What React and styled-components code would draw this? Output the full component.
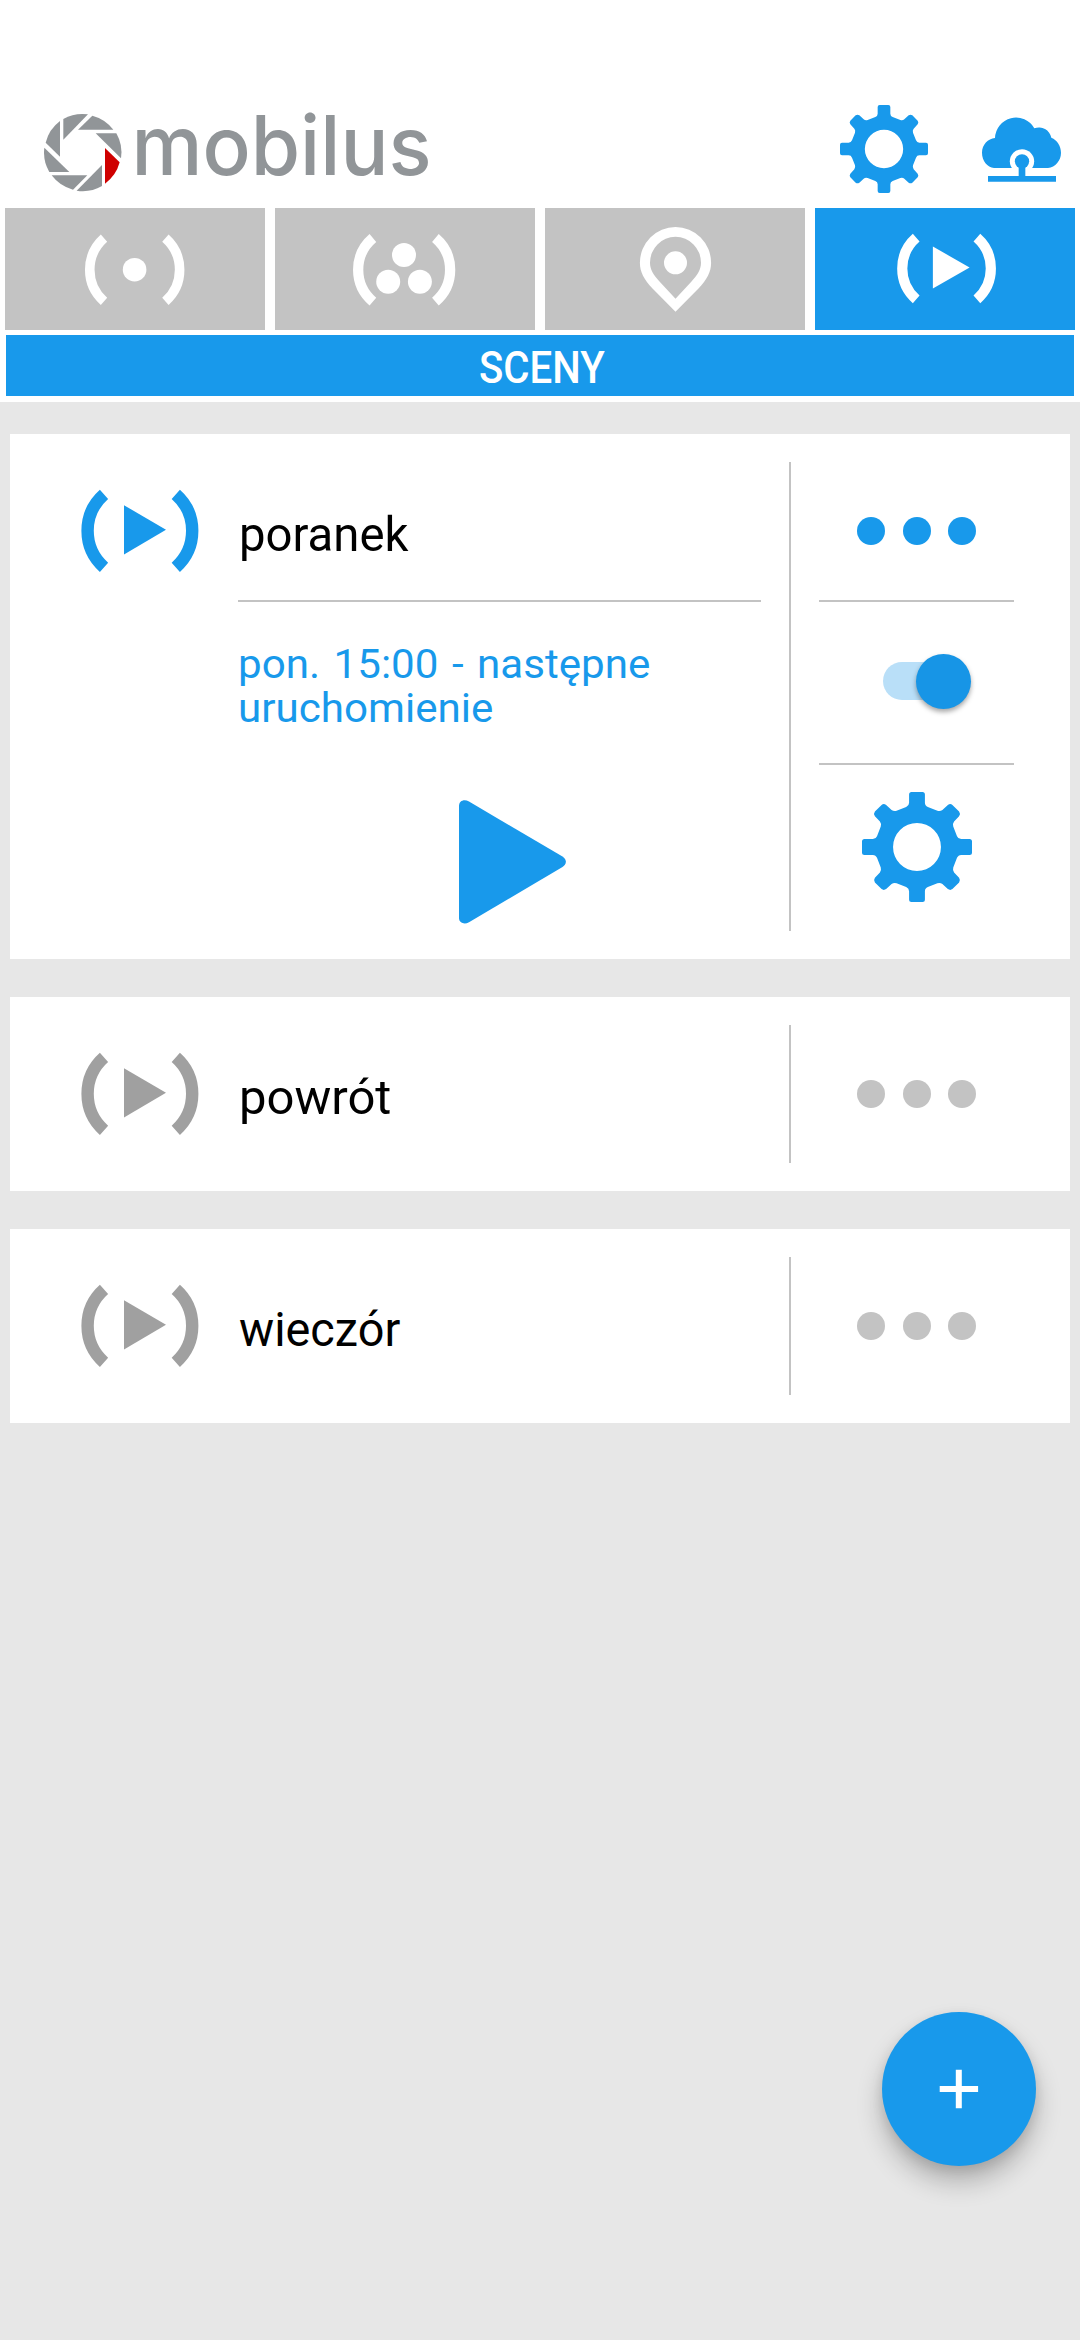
import React from "react";
import styled, { createGlobalStyle, ThemeProvider } from "styled-components";

const theme = {
  blue: "#1899eb",
  grey: "#c3c3c3",
  iconGrey: "#a0a0a0",
  page: "#e7e7e7",
};

const GlobalStyle = createGlobalStyle`
  * { box-sizing: border-box; }
  body {
    margin: 0;
    background: ${theme.page};
    font-family: Roboto, "Noto Sans", sans-serif;
  }
  button { font: inherit; border: 0; padding: 0; background: none; cursor: pointer; }
  svg { display: block; }
`;

const Screen = styled.div`
  position: relative;
  width: 1080px;
  height: 2340px;
  overflow: hidden;
  background: ${({ theme }) => theme.page};
`;

const Top = styled.div`
  background: #fff;
  padding-bottom: 6px;
`;

const Header = styled.header`
  display: flex;
  align-items: flex-start;
  justify-content: space-between;
  height: 208px;
  padding: 90px 19px 0 44px;
`;

const Actions = styled.div`
  display: flex;
  align-items: flex-start;
  gap: 54px;
  padding-top: 15px;
  color: ${({ theme }) => theme.blue};
`;

const CloudButton = styled.button`
  margin-top: 12px;
  color: inherit;
`;

const GearButton = styled.button`
  display: block;
  color: ${({ theme }) => theme.blue};
`;

const Tabs = styled.nav`
  display: grid;
  grid-template-columns: repeat(4, 1fr);
  gap: 10px;
  padding: 0 5px;
`;

const Tab = styled.button`
  display: block;
  height: 122px;
  color: #fff;
  background: ${({ $active, theme }) => ($active ? theme.blue : theme.grey)};
`;

const Title = styled.h1`
  display: flex;
  align-items: center;
  justify-content: center;
  height: 61px;
  margin: 5px 6px 0;
  padding-top: 4px;
  padding-left: 3px;
  background: ${({ theme }) => theme.blue};
  color: #fff;
  font-size: 44px;
  font-weight: 500;
  line-height: 52px;
`;

const Condensed = styled.span`
  display: inline-block;
  white-space: nowrap;
  transform: scaleX(${({ $ratio }) => $ratio});
  transform-origin: ${({ $origin }) => $origin || "left"} center;
`;

const List = styled.main`
  display: flex;
  flex-direction: column;
  gap: 38px;
  padding: 32px 10px 0;
`;

const Card = styled.section`
  display: flex;
  padding: 28px 0;
  background: #fff;
`;

const IconCell = styled.div`
  display: flex;
  align-items: center;
  width: 228px;
  height: 138px;
  padding-left: 71px;
  color: ${({ $active, theme }) => ($active ? theme.blue : theme.iconGrey)};
`;

const Body = styled.div`
  width: 523px;
`;

const Name = styled.div`
  display: flex;
  align-items: center;
  height: 138px;
  padding-top: 7px;
  padding-left: 1px;
  color: #000;
  font-size: 49px;
  font-weight: 380;
`;

const Rule = styled.hr`
  height: 2px;
  margin: 0;
  border: 0;
  background: ${({ theme }) => theme.grey};
`;

const Schedule = styled.div`
  display: flex;
  flex-direction: column;
  align-items: flex-start;
  margin-top: 40px;
  color: ${({ theme }) => theme.blue};
  font-size: 41.5px;
  font-weight: 380;
  line-height: 44px;
  word-spacing: 3px;
`;

const PlayButton = styled.button`
  display: block;
  margin: 70px 0 0 221px;
  color: ${({ theme }) => theme.blue};
`;

const Divider = styled.div`
  width: 2px;
  margin: 0 28px;
  background: ${({ theme }) => theme.grey};
`;

const Side = styled.div`
  width: 195px;
  min-height: ${({ $open }) => ($open ? "469px" : "138px")};
`;

const More = styled.button`
  display: flex;
  align-items: center;
  justify-content: center;
  gap: 17.5px;
  width: 100%;
  height: 138px;
`;

const Dot = styled.span`
  width: 28px;
  height: 28px;
  border-radius: 50%;
  background: ${({ $active, theme }) => ($active ? theme.blue : theme.grey)};
`;

const SwitchCell = styled.div`
  display: flex;
  align-items: center;
  height: 161px;
  padding: 0 0 3px 64px;
`;

const Track = styled.div`
  display: flex;
  align-items: center;
  justify-content: flex-end;
  width: 80px;
  height: 38px;
  border-radius: 19px;
  background: #b9dff8;
`;

const Thumb = styled.span`
  flex: none;
  width: 55px;
  height: 55px;
  margin-right: -8px;
  border-radius: 50%;
  background: #1795e6;
  box-shadow: 0 3px 5px rgba(0, 0, 0, 0.35);
`;

const SettingsCell = styled.div`
  display: flex;
  justify-content: center;
  padding-top: 27px;
`;

const Fab = styled.button`
  position: absolute;
  top: 2012px;
  left: 882px;
  display: flex;
  align-items: center;
  justify-content: center;
  width: 154px;
  height: 154px;
  border-radius: 50%;
  background: ${({ theme }) => theme.blue};
  box-shadow: 0 16px 26px rgba(0, 0, 0, 0.24), 0 4px 12px rgba(0, 0, 0, 0.1);
`;

/* One quarter of the gear outline; the other three are its rotations. */
const gearQuarter = [
  ["L", -13, -132], ["L", 13, -132], ["Q", 19, -132, 19, -126], ["L", 19, -106],
  ["Q", 19, -99, 26, -96], ["L", 49, -87], ["Q", 56, -85, 61, -89], ["L", 74, -101],
  ["Q", 80, -105, 85, -101], ["L", 101, -85], ["Q", 105, -80, 101, -74], ["L", 89, -61],
  ["Q", 85, -56, 87, -49], ["L", 96, -26], ["Q", 99, -19, 106, -19], ["L", 126, -19],
  ["Q", 132, -19, 132, -13],
];

const gearPath = (() => {
  const parts = [];
  for (let turn = 0; turn < 4; turn += 1) {
    gearQuarter.forEach(([cmd, ...nums]) => {
      const out = [];
      for (let i = 0; i < nums.length; i += 2) {
        let [x, y] = [nums[i], nums[i + 1]];
        for (let t = 0; t < turn; t += 1) [x, y] = [-y, x];
        out.push(x, y);
      }
      parts.push(cmd + out.join(" "));
    });
  }
  return "M" + parts.join(" ").slice(1) + "Z M57.5 0A57.5 57.5 0 1 0 -57.5 0A57.5 57.5 0 1 0 57.5 0Z";
})();

const Gear = ({ size }) => (
  <svg width={size} height={size} viewBox="-132 -132 264 264" fill="currentColor" fillRule="evenodd">
    <path d={gearPath} />
  </svg>
);

const Cloud = () => (
  <svg width="79" height="65" viewBox="546 111 237 195" fill="currentColor">
    <path d="M582 264C562 262 546 242 546 218C546 194 564 176 585 174A63 63 0 0 1 703 145A38 38 0 0 1 754 173C772 180 783 198 783 218C783 242 766 261 744 264Z" />
    <circle cx="666" cy="244" r="36.5" fill="#fff" />
    <circle cx="666" cy="244" r="21.5" />
    <path d="M656 255H676V288H768V305H564V288H656Z" />
  </svg>
);

const Logo = () => (
  <svg width="400" height="112" viewBox="44 90 400 112">
    <g transform="translate(0 80) scale(0.33333)" fill="#919598">
      <path d="M180 123V230L137 188A116 116 0 0 1 180 123Z" />
      <path d="M190 117A116 116 0 0 1 264 103L190 179Z" />
      <path d="M277 107A116 116 0 0 1 340 149H234Z" />
      <path d="M287 160H349A116 116 0 0 1 363 235Z" />
      <path d="M315 204L359 247A116 116 0 0 1 315 311Z" fill="#cf0000" />
      <path d="M306 255V318A116 116 0 0 1 230 332Z" />
      <path d="M155 286H262L219 329A116 116 0 0 1 155 286Z" />
      <path d="M133 203L208 276H148A116 116 0 0 1 133 203Z" />
    </g>
    <text
      x="131.5"
      y="175.3"
      textLength="300"
      lengthAdjust="spacingAndGlyphs"
      fontFamily="Inter, sans-serif"
      fontSize="82"
      fontWeight="550"
      fill="#919598"
    >
      mobilus
    </text>
  </svg>
);

const TabIcon = ({ x, children }) => (
  <svg width="260" height="122" viewBox={`${x} 208 260 122`} fill="currentColor">
    {children}
  </svg>
);

const Arcs = ({ d, width }) => <path d={d} fill="none" stroke="currentColor" strokeWidth={width} />;

const DeviceIcon = () => (
  <TabIcon x={5}>
    <Arcs width={9.6} d="M104 238.2A42.2 42.2 0 0 0 104 301.4M165.4 238.2A42.2 42.2 0 0 1 165.4 301.4" />
    <circle cx="134.6" cy="269.7" r="11.8" />
  </TabIcon>
);

const GroupIcon = () => (
  <TabIcon x={275}>
    <Arcs width={10.3} d="M372.9 238A41.7 41.7 0 0 0 372.9 301.6M435.4 238A41.7 41.7 0 0 1 435.4 301.6" />
    <circle cx="404" cy="255" r="12" />
    <circle cx="388.2" cy="281.7" r="12" />
    <circle cx="419.9" cy="281.7" r="12" />
  </TabIcon>
);

const PlaceIcon = () => (
  <TabIcon x={545}>
    <path
      fillRule="evenodd"
      d="M675.5 311.8L652.5 288.5C644 279.5 639.9 272 639.9 262.8A35.6 35.8 0 0 1 711.1 262.8C711.1 272 707 279.5 698.5 288.5ZM675.5 298.8L691.5 281.5C697.5 275 701 269.5 701 262.8A25.5 26 0 0 0 650 262.8C650 269.5 653.5 275 659.5 281.5Z"
    />
    <circle cx="675.5" cy="262.8" r="11.5" />
  </TabIcon>
);

const ScenesIcon = () => (
  <TabIcon x={815}>
    <Arcs width={10.2} d="M916.2 237.7A41 41 0 0 0 916.2 299.3M976.9 237.7A41 41 0 0 1 976.9 299.3" />
    <path d="M932.9 246.6V288.4L969.6 267.4Z" />
  </TabIcon>
);

const SceneIcon = () => (
  <svg width="118" height="84" viewBox="81 488.5 118 84" fill="currentColor">
    <Arcs width={12.4} d="M104 493.8A48.8 48.8 0 0 0 104 566.8M175.8 493.8A48.8 48.8 0 0 1 175.8 566.8" />
    <path d="M124 504.7V554L166 529.3Z" />
  </svg>
);

const Play = () => (
  <svg width="107" height="124" viewBox="0 0 107 124" fill="currentColor">
    <path d="M0 6C0 1 5 -1.2 10 1.6L103.5 56.5C108 59.5 108 64.2 103.5 67L10 122.2C5 125 0 122.5 0 118Z" />
  </svg>
);

const Scene = ({ name, ratio, active, schedule }) => (
  <Card>
    <IconCell $active={active}>
      <SceneIcon />
    </IconCell>
    <Body>
      <Name>
        <Condensed $ratio={ratio}>{name}</Condensed>
      </Name>
      {schedule && (
        <>
          <Rule />
          <Schedule>
            {schedule.map((line) => (
              <Condensed key={line} $ratio={1.015}>{line}</Condensed>
            ))}
          </Schedule>
          <PlayButton aria-label="Uruchom">
            <Play />
          </PlayButton>
        </>
      )}
    </Body>
    <Divider />
    <Side $open={Boolean(schedule)}>
      <More aria-label="Więcej">
        <Dot $active={active} />
        <Dot $active={active} />
        <Dot $active={active} />
      </More>
      {schedule && (
        <>
          <Rule />
          <SwitchCell>
            <Track role="switch" aria-checked="true">
              <Thumb />
            </Track>
          </SwitchCell>
          <Rule />
          <SettingsCell>
            <GearButton aria-label="Ustawienia">
              <Gear size={110} />
            </GearButton>
          </SettingsCell>
        </>
      )}
    </Side>
  </Card>
);

export default function App() {
  return (
    <ThemeProvider theme={theme}>
      <GlobalStyle />
      <Screen>
        <Top>
          <Header>
            <Logo />
            <Actions>
              <GearButton aria-label="Ustawienia">
                <Gear size={88} />
              </GearButton>
              <CloudButton aria-label="Chmura">
                <Cloud />
              </CloudButton>
            </Actions>
          </Header>
          <Tabs>
            <Tab><DeviceIcon /></Tab>
            <Tab><GroupIcon /></Tab>
            <Tab><PlaceIcon /></Tab>
            <Tab $active><ScenesIcon /></Tab>
          </Tabs>
          <Title>
            <Condensed $ratio={0.913} $origin="center">SCENY</Condensed>
          </Title>
        </Top>
        <List>
          <Scene
            name="poranek"
            ratio={0.965}
            active
            schedule={["pon. 15:00 - następne", "uruchomienie"]}
          />
          <Scene name="powrót" ratio={1} />
          <Scene name="wieczór" ratio={0.955} />
        </List>
        <Fab aria-label="Dodaj">
          <svg width="40" height="40" viewBox="0 0 40 40" fill="#fff">
            <path d="M16.8 0.8H22.8V16.9H39.1V22.9H22.8V39.2H16.8V22.9H0.7V16.9H16.8Z" />
          </svg>
        </Fab>
      </Screen>
    </ThemeProvider>
  );
}
